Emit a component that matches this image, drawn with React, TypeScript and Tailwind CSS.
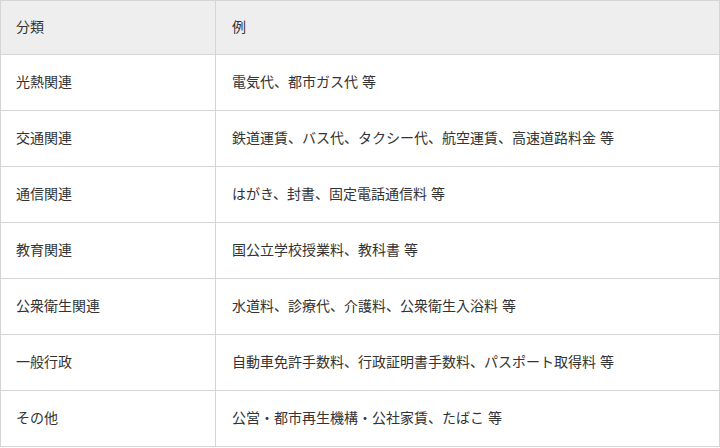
const rows = [
  { category: "光熱関連", example: "電気代、都市ガス代 等" },
  { category: "交通関連", example: "鉄道運賃、バス代、タクシー代、航空運賃、高速道路料金 等" },
  { category: "通信関連", example: "はがき、封書、固定電話通信料 等" },
  { category: "教育関連", example: "国公立学校授業料、教科書 等" },
  { category: "公衆衛生関連", example: "水道料、診療代、介護料、公衆衛生入浴料 等" },
  { category: "一般行政", example: "自動車免許手数料、行政証明書手数料、パスポート取得料 等" },
  { category: "その他", example: "公営・都市再生機構・公社家賃、たばこ 等" },
];

export default function App() {
  return (
    <div className="w-[720px] h-[448px] bg-white font-['Liberation_Sans','Noto_Sans_CJK_JP',sans-serif] text-[14px] text-[#333]">
      <div className="border border-[#d5d5d5]">
        {/* Header */}
        <div className="flex h-[54px] bg-[#eeeeee] border-b border-[#d5d5d5]">
          <div className="w-[215px] shrink-0 border-r border-[#d5d5d5] pl-[15px] flex items-center">分類</div>
          <div className="flex-1 pl-4 flex items-center">例</div>
        </div>

        {rows.map((r, i) => (
          <div
            key={r.category}
            className={`flex ${i < rows.length - 1 ? "h-[56px] border-b border-[#d5d5d5]" : "h-[55px]"}`}
          >
            <div className="w-[215px] shrink-0 border-r border-[#d5d5d5] pl-[15px] flex items-center">
              {r.category}
            </div>
            <div className="flex-1 pl-4 flex items-center">{r.example}</div>
          </div>
        ))}
      </div>
    </div>
  );
}
